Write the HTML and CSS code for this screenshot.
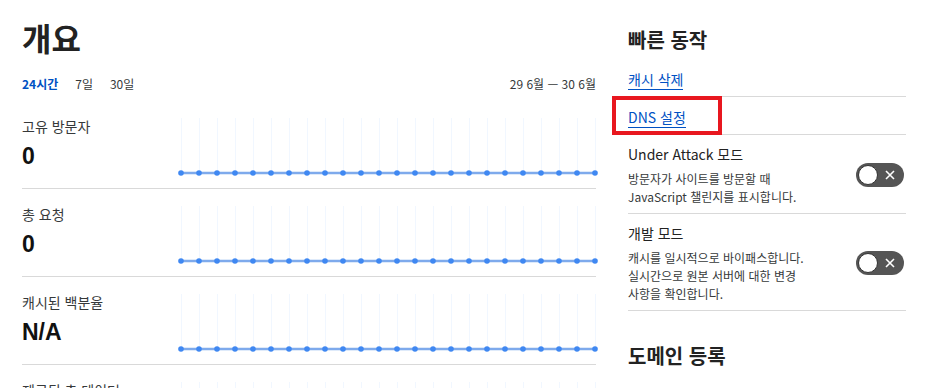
FILE: index.html
```html
<!doctype html>
<html lang="ko">
<head>
	<meta charset="utf-8">
	<title>개요</title>
	<link rel="stylesheet" href="styles.css">
</head>
<body>
<div class="page">
	<div class="overview">
		<h1 class="title">개요</h1>
		<div class="range-bar">
			<div class="tabs">
				<span class="tab active">24시간</span>
				<span class="tab">7일</span>
				<span class="tab">30일</span>
			</div>
			<div class="range">29 6월 — 30 6월</div>
		</div>

		<div class="stats">
			<div class="stat">
				<div class="stat-info">
					<div class="stat-label">고유 방문자</div>
					<div class="stat-value">0</div>
				</div>
				<div class="chart"></div>
			</div>
			<div class="stat">
				<div class="stat-info">
					<div class="stat-label">총 요청</div>
					<div class="stat-value">0</div>
				</div>
				<div class="chart"></div>
			</div>
			<div class="stat">
				<div class="stat-info">
					<div class="stat-label">캐시된 백분율</div>
					<div class="stat-value">N/A</div>
				</div>
				<div class="chart"></div>
			</div>
			<div class="stat">
				<div class="stat-info">
					<div class="stat-label">제공된 총 데이터</div>
					<div class="stat-value">0 B</div>
				</div>
				<div class="chart"></div>
			</div>
		</div>
	</div>

	<div class="sidebar">
		<h2 class="side-title">빠른 동작</h2>
		<div class="action">
			<a href="#" class="action-link">캐시 삭제</a>
		</div>
		<div class="action">
			<a href="#" class="action-link">DNS 설정</a>
			<span class="highlight"></span>
		</div>
		<div class="setting">
			<div class="setting-text">
				<div class="setting-name">Under Attack 모드</div>
				<div class="setting-desc">방문자가 사이트를 방문할 때<br>JavaScript 챌린지를 표시합니다.</div>
			</div>
			<label class="switch">
				<input type="checkbox">
				<span class="knob"></span>
				<svg class="cross" width="10" height="10" viewBox="0 0 10 10"><path d="M1 1L9 9M9 1L1 9" stroke="#fff" stroke-width="1.6"/></svg>
			</label>
		</div>
		<div class="setting">
			<div class="setting-text">
				<div class="setting-name">개발 모드</div>
				<div class="setting-desc">캐시를 일시적으로 바이패스합니다.<br>실시간으로 원본 서버에 대한 변경<br>사항을 확인합니다.</div>
			</div>
			<label class="switch">
				<input type="checkbox">
				<span class="knob"></span>
				<svg class="cross" width="10" height="10" viewBox="0 0 10 10"><path d="M1 1L9 9M9 1L1 9" stroke="#fff" stroke-width="1.6"/></svg>
			</label>
		</div>
		<h2 class="side-title domain">도메인 등록</h2>
	</div>
</div>

<script>
	// draw the flat sparkline for every stat row
	var charts = document.querySelectorAll(".chart");
	for (var c = 0; c < charts.length; c++) {
		var svg = '<svg width="416" height="58" viewBox="0 0 416 58">';
		for (var i = 0; i < 24; i++) {
			var x = 1.5 + i * 18;
			svg += '<line x1="' + x + '" y1="0" x2="' + x + '" y2="55" stroke="#f1f7ff" stroke-width="1"/>';
		}
		svg += '<line x1="1" y1="55" x2="415" y2="55" stroke="#7eaaec" stroke-width="2.5"/>';
		for (var j = 0; j < 24; j++) {
			svg += '<circle cx="' + (1 + j * 18) + '" cy="55" r="2.8" fill="#3f88f2"/>';
		}
		svg += '</svg>';
		charts[c].innerHTML = svg;
	}
</script>
</body>
</html>
```

FILE: styles.css
```css
body {
  margin: 0;
  font-family: "Noto Sans CJK KR", "Noto Sans", sans-serif;
  color: #222;
  background: #fff;
  overflow: hidden;
}

.page {
  display: flex;
  gap: 32px;
  padding: 0 22px;
  height: 388px;
  overflow: hidden;
}

/* left column */
.overview {
  width: 574px;
  flex: none;
}

.title {
  margin: 17px 0 0;
  font-size: 32px;
  line-height: 40px;
  font-weight: 700;
  color: #222;
}

.range-bar {
  display: flex;
  justify-content: space-between;
  margin-top: 18px;
  font-size: 12px;
  line-height: 18px;
  color: #36393a;
}

.tabs {
  display: flex;
  gap: 17px;
}

.tab.active {
  color: #0051c3;
  font-weight: 700;
}

.stats {
  margin-top: 8px;
}

.stat {
  display: flex;
  height: 88px;
  box-sizing: border-box;
  border-bottom: 1px solid #d9d9d9;
}

.stat-info {
  width: 159px;
  flex: none;
}

.stat-label {
  margin-top: 15px;
  font-size: 14px;
  line-height: 20px;
  color: #36393a;
}

.stat-value {
  margin-top: 6px;
  font-family: "Liberation Sans", Arial, sans-serif;
  font-size: 23px;
  line-height: 28px;
  font-weight: 700;
  color: #111;
}

.chart {
  margin-top: 17px;
  margin-left: -1px;
  height: 58px;
}

.chart svg {
  display: block;
  overflow: visible;
}

/* right column */
.sidebar {
  width: 278px;
  flex: none;
}

.side-title {
  margin: 26px 0 0;
  font-size: 20px;
  line-height: 28px;
  font-weight: 700;
  color: #222;
}

.side-title.domain {
  margin-top: 31px;
}

.action {
  position: relative;
  height: 38px;
  box-sizing: border-box;
  padding-top: 10px;
  border-bottom: 1px solid #d9d9d9;
  font-size: 14px;
  line-height: 20px;
}

.side-title + .action {
  margin-top: 5px;
}

.action-link {
  color: #0051c3;
  text-decoration: none;
  border-bottom: 1px solid #0051c3;
}

.highlight {
  position: absolute;
  top: -1px;
  left: -16px;
  width: 110px;
  height: 39px;
  box-sizing: border-box;
  border: 4px solid #e8171f;
}

.setting {
  display: flex;
  justify-content: space-between;
  align-items: center;
  padding: 9px 2px 7px 0;
  border-bottom: 1px solid #d9d9d9;
}

.setting-name {
  font-size: 14px;
  line-height: 20px;
  color: #222;
}

.setting-desc {
  margin-top: 6px;
  font-size: 12px;
  line-height: 18px;
  color: #36393a;
  word-break: keep-all;
}

/* The switch */
.switch {
  position: relative;
  display: inline-block;
  width: 48px;
  height: 24px;
  flex: none;
  border-radius: 12px;
  background-color: #555;
  cursor: pointer;
}

.switch input {display:none;}

.knob {
  position: absolute;
  top: 2px;
  left: 2px;
  width: 20px;
  height: 20px;
  box-sizing: border-box;
  border-radius: 50%;
  background-color: #fff;
  border: 1px solid #333;
}

.cross {
  position: absolute;
  right: 9px;
  top: 7px;
}
```
